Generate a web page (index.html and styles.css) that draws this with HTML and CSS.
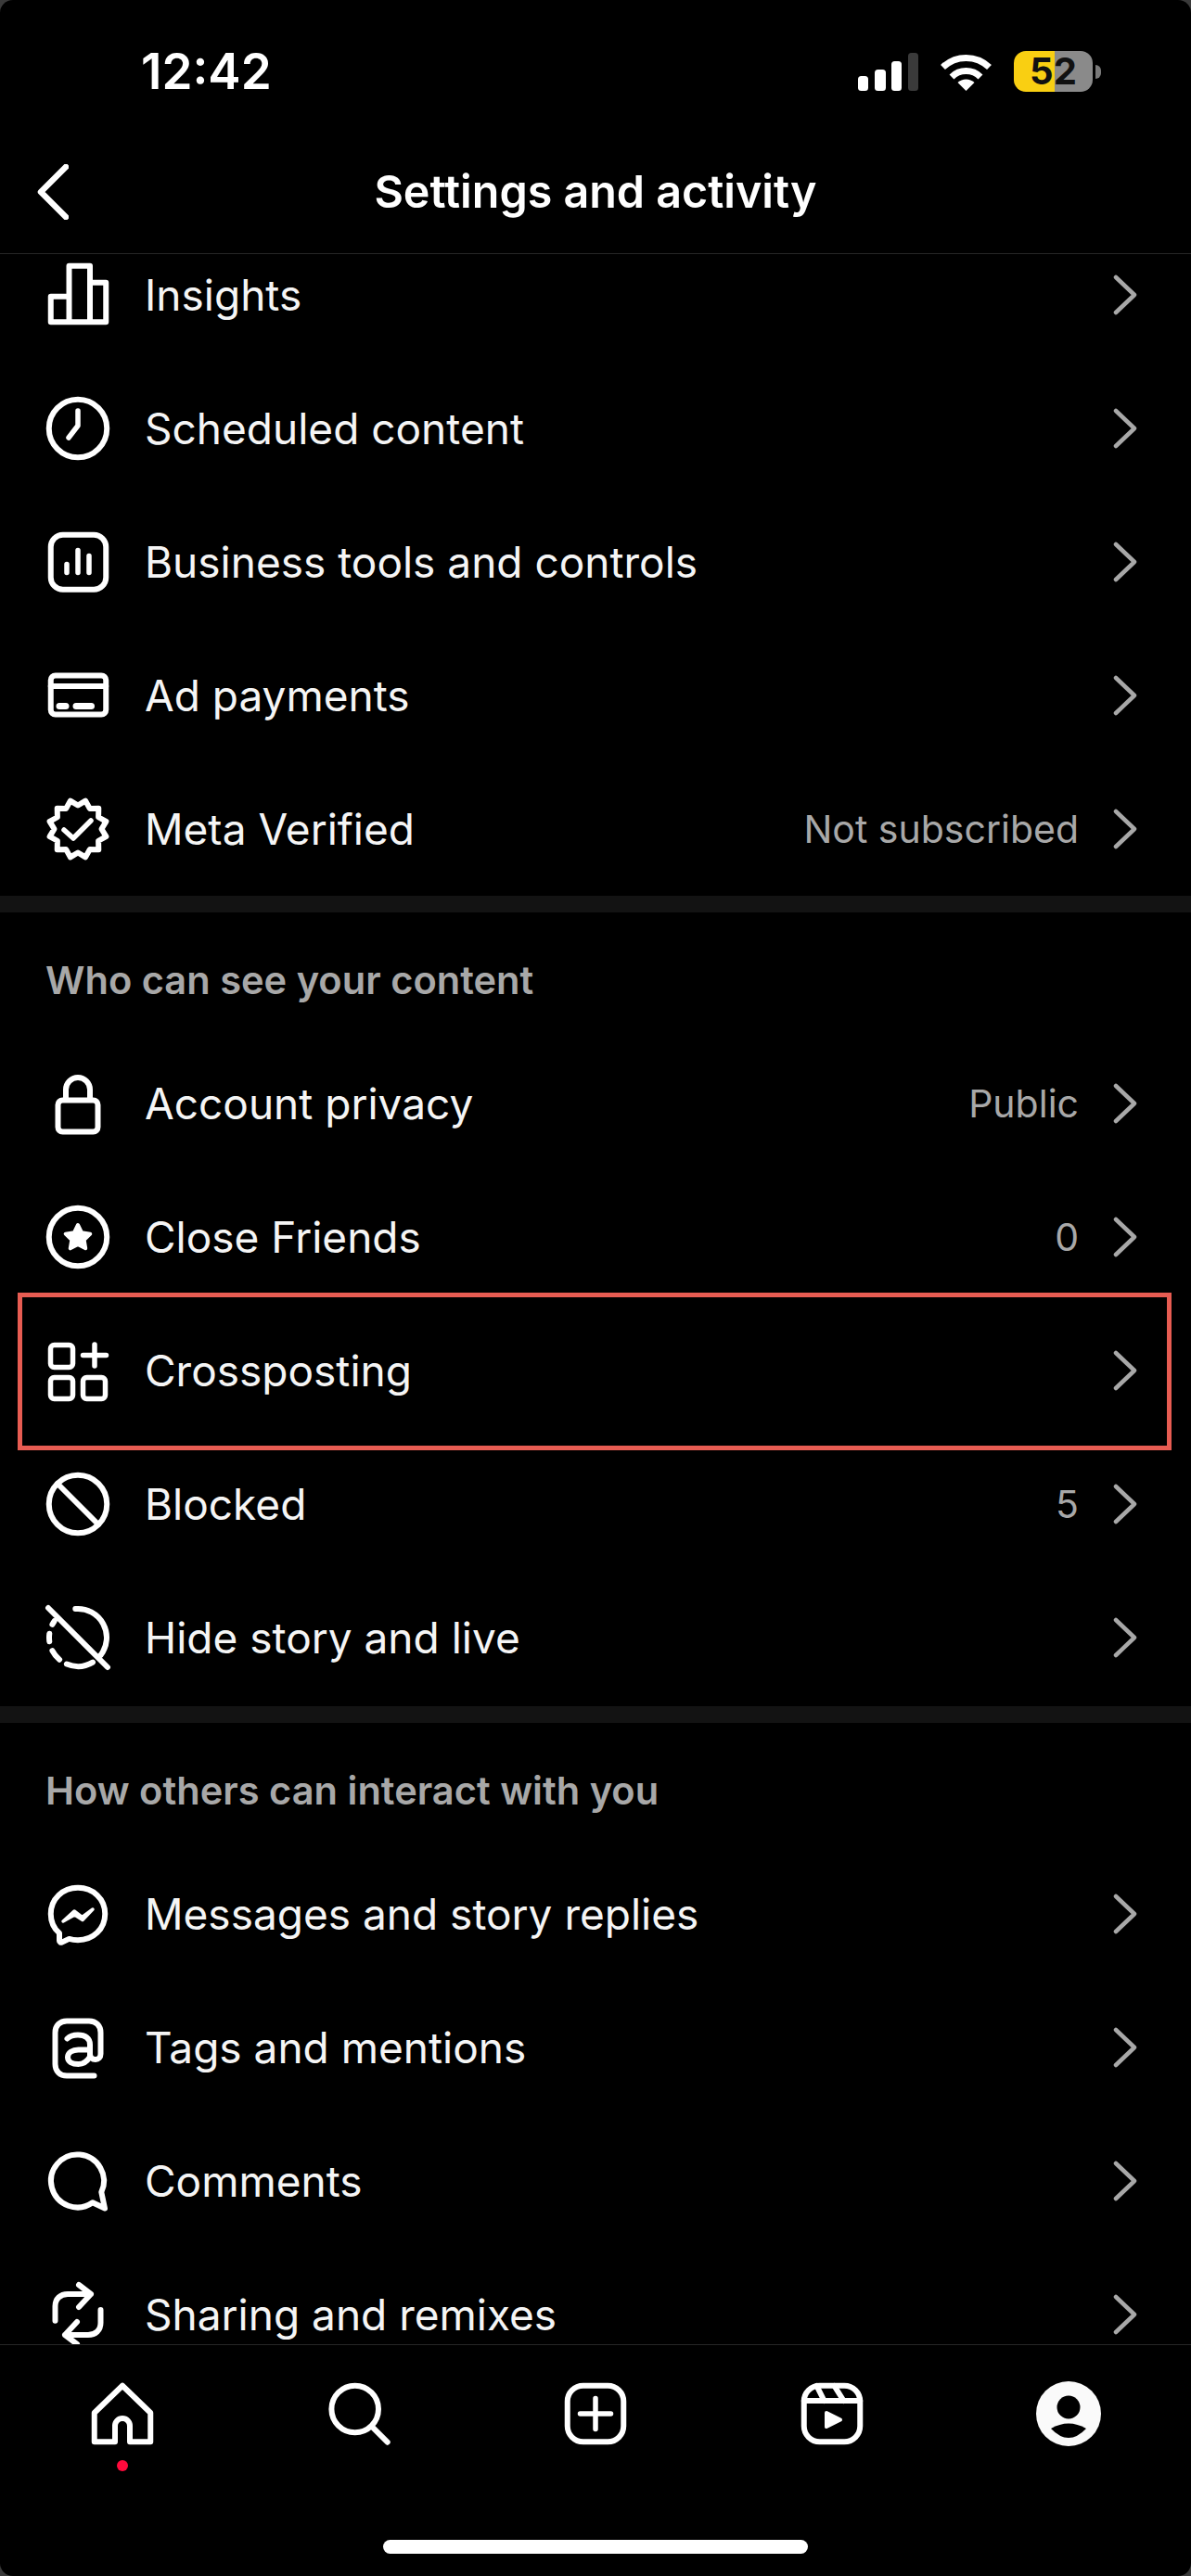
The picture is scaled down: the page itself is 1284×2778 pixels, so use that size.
FILE: index.html
```html
<!DOCTYPE html>
<html lang="en">
<head>
<meta charset="utf-8">
<title>Settings and activity</title>
<link rel="stylesheet" href="styles.css">
</head>
<body>
<div class="app">
  <div class="status">
    <span class="time">12:42</span>
    <div class="status-icons">
      <svg class="signal" viewBox="0 0 65 41"><rect x="0" y="25" width="11" height="16" rx="3.5"/><rect x="18" y="18" width="12" height="23" rx="3.5"/><rect x="36" y="9" width="11" height="32" rx="3.5"/><rect class="dim" x="54" y="0" width="11" height="41" rx="3.5"/></svg>
      <svg class="wifi" viewBox="0 0 57 41"><path class="arc" d="M3.5 15.5A36 36 0 0 1 53.5 15.5"/><path class="arc" d="M13 26A22 22 0 0 1 44 26"/><path d="M28.5 41L19.5 32A13 13 0 0 1 37.5 32Z"/></svg>
      <div class="battery"><div class="battery-body">52</div><div class="battery-cap"></div></div>
    </div>
  </div>
  <header class="nav">
    <svg class="back" viewBox="0 0 36 60"><path d="M33 3L6 30L33 57"/></svg>
    <h1 class="title">Settings and activity</h1>
  </header>
  <main class="scroll">
    <div class="list">
      <div class="row">
        <svg class="ic" viewBox="0 0 72 72"><path d="M6.75 37.75H26.5V65.25H6.75ZM26.5 4.75H49V65.25H26.5ZM49 22.75H66.25V65.25H49Z"/></svg>
        <span class="label">Insights</span>
        <svg class="chev" viewBox="0 0 26 44"><path d="M3 3L23 22L3 41"/></svg>
      </div>
      <div class="row">
        <svg class="ic" viewBox="0 0 72 72"><circle cx="36" cy="36" r="31.25"/><path class="thin" d="M36 17V33L26 46"/></svg>
        <span class="label">Scheduled content</span>
        <svg class="chev" viewBox="0 0 26 44"><path d="M3 3L23 22L3 41"/></svg>
      </div>
      <div class="row">
        <svg class="ic" viewBox="0 0 72 72"><rect x="6.75" y="6.75" width="59.5" height="59" rx="13"/><path class="thin" d="M24 38.5V47.5M36 23.5V47.5M48 29.5V47.5"/></svg>
        <span class="label">Business tools and controls</span>
        <svg class="chev" viewBox="0 0 26 44"><path d="M3 3L23 22L3 41"/></svg>
      </div>
      <div class="row">
        <svg class="ic" viewBox="0 0 72 72"><rect x="6.75" y="14.5" width="59.5" height="42" rx="5"/><path d="M6.75 26H66.25"/><path class="pill" d="M16 47.5H23M34 47.5H50.5"/></svg>
        <span class="label">Ad payments</span>
        <svg class="chev" viewBox="0 0 26 44"><path d="M3 3L23 22L3 41"/></svg>
      </div>
      <div class="row">
        <svg class="ic" viewBox="0 0 72 72"><path d="M61.5 36L66.4 44.15L58.1 48.75L58.3 58.3L48.75 58.1L44.15 66.4L36 61.5L27.85 66.4L23.25 58.1L13.7 58.3L13.9 48.75L5.6 44.15L10.5 36L5.6 27.85L13.9 23.25L13.7 13.7L23.25 13.9L27.85 5.6L36 10.5L44.15 5.6L48.75 13.9L58.3 13.7L58.1 23.25L66.4 27.85Z"/><path class="thin" d="M21 37L31 46L50 27"/></svg>
        <span class="label">Meta Verified</span>
        <span class="value">Not subscribed</span>
        <svg class="chev" viewBox="0 0 26 44"><path d="M3 3L23 22L3 41"/></svg>
      </div>
      <div class="divider"></div>
      <h2 class="section">Who can see your content</h2>
      <div class="row">
        <svg class="ic" viewBox="0 0 72 72"><rect x="14.5" y="32.5" width="43" height="34" rx="5"/><path d="M23 32V21A13 13 0 0 1 49 21V32"/></svg>
        <span class="label">Account privacy</span>
        <span class="value">Public</span>
        <svg class="chev" viewBox="0 0 26 44"><path d="M3 3L23 22L3 41"/></svg>
      </div>
      <div class="row">
        <svg class="ic" viewBox="0 0 72 72"><circle cx="36" cy="36" r="31.25"/><path class="solid" d="M36 23L40.1 31.34L49.3 32.67L42.66 39.16L44.23 48.33L36 44L27.77 48.33L29.34 39.16L22.7 32.67L31.9 31.34Z"/></svg>
        <span class="label">Close Friends</span>
        <span class="value">0</span>
        <svg class="chev" viewBox="0 0 26 44"><path d="M3 3L23 22L3 41"/></svg>
      </div>
      <div class="row row-marked">
        <svg class="ic" viewBox="0 0 72 72"><rect class="thin" x="6.5" y="8.5" width="24" height="24" rx="4"/><rect class="thin" x="6.5" y="43.5" width="24" height="23" rx="4"/><rect class="thin" x="41.5" y="43.5" width="24" height="23" rx="4"/><path class="thin" d="M41.5 19.5H66.5M54 8V31"/></svg>
        <span class="label">Crossposting</span>
        <svg class="chev" viewBox="0 0 26 44"><path d="M3 3L23 22L3 41"/></svg>
      </div>
      <div class="row">
        <svg class="ic" viewBox="0 0 72 72"><circle cx="36" cy="36" r="31.25"/><path d="M14 14L58 58"/></svg>
        <span class="label">Blocked</span>
        <span class="value">5</span>
        <svg class="chev" viewBox="0 0 26 44"><path d="M3 3L23 22L3 41"/></svg>
      </div>
      <div class="row">
        <svg class="ic" viewBox="0 0 72 72"><path d="M33.3 5.1A31 31 0 0 1 60.4 55.1M52 62.6A31 31 0 0 1 23.9 64.5M16.1 59.7A31 31 0 0 1 8.4 50.1M5.3 40.3A31 31 0 0 1 5.3 31.7M8.4 21.9A31 31 0 0 1 10.6 18.2M4 4L68 68"/></svg>
        <span class="label">Hide story and live</span>
        <svg class="chev" viewBox="0 0 26 44"><path d="M3 3L23 22L3 41"/></svg>
      </div>
      <div class="divider divider-low"></div>
      <h2 class="section">How others can interact with you</h2>
      <div class="row">
        <svg class="ic" viewBox="0 0 72 72"><path d="M36 7.75C19.5 7.75 6.75 19.8 6.75 36C6.75 44.5 10.2 51.8 16 56.8V65C16 66.5 17.5 67.2 18.7 66.6L26.5 62.9C29.5 63.8 32.6 64.2 36 64.2C52.5 64.2 65.25 52.2 65.25 36C65.25 19.8 52.5 7.75 36 7.75Z"/><path class="bolt" d="M20 44L32 33L40.5 39.5L52 31L41 42.5L32.5 37Z"/></svg>
        <span class="label">Messages and story replies</span>
        <svg class="chev" viewBox="0 0 26 44"><path d="M3 3L23 22L3 41"/></svg>
      </div>
      <div class="row">
        <svg class="ic" viewBox="0 0 72 72"><path d="M53.5 66.5H24C16.5 66.5 11.5 61.5 11.5 54V20C11.5 12.5 16.5 7.5 24 7.5H48C55.5 7.5 60.5 12.5 60.5 20V43C60.5 47 58 49 55 49C51.5 49 49 47 49 43V33C49 26 44 22.5 36 22.5C31 22.5 27 24 24.5 26.5M25 46.5C25 41.5 30 38.5 36.5 38.5H49V46C46 51 41.5 54 36.5 54C30 54 25 51.5 25 46.5Z"/></svg>
        <span class="label">Tags and mentions</span>
        <svg class="chev" viewBox="0 0 26 44"><path d="M3 3L23 22L3 41"/></svg>
      </div>
      <div class="row">
        <svg class="ic" viewBox="0 0 72 72"><path d="M51.8 59.3A28.5 28.5 0 1 1 61.3 48L65 65.5Z"/></svg>
        <span class="label">Comments</span>
        <svg class="chev" viewBox="0 0 26 44"><path d="M3 3L23 22L3 41"/></svg>
      </div>
      <div class="row">
        <svg class="ic" viewBox="0 0 72 72"><path d="M11.5 42.7V27C11.5 19 17 14 25 14H50M37 4L50 14L37 28M60.5 31V45C60.5 53 55 58 47 58H22M35 44L22 58L35 68"/></svg>
        <span class="label">Sharing and remixes</span>
        <svg class="chev" viewBox="0 0 26 44"><path d="M3 3L23 22L3 41"/></svg>
      </div>
    </div>
  </main>
  <nav class="tabs">
    <div class="tab">
      <svg class="ic" viewBox="0 0 72 72"><path d="M5.75 66.25V35L36 5.75L66.25 35V66.25H44V49A8 8 0 0 0 28 49V66.25Z"/></svg>
      <span class="dot"></span>
    </div>
    <div class="tab"><svg class="ic" viewBox="0 0 72 72"><circle cx="31.7" cy="31" r="25.3"/><path d="M50.7 50.7L66.7 66.7"/></svg></div>
    <div class="tab"><svg class="ic" viewBox="0 0 72 72"><rect x="5.75" y="5.75" width="60.5" height="60.5" rx="17"/><path class="thin" d="M36 19.5V52.5M19.5 36H52.5"/></svg></div>
    <div class="tab"><svg class="ic" viewBox="0 0 72 72"><rect x="5.75" y="5.75" width="60.5" height="60.5" rx="17"/><path d="M5.75 22H66.25M19.5 6L27.5 22M38.5 6L48.5 22"/><path class="solid" d="M30 35L45 42.5L30 50Z"/></svg></div>
    <div class="tab">
      <svg class="ic ic-profile" viewBox="0 0 72 72"><circle class="face" cx="36" cy="36" r="35"/><circle class="cut" cx="36" cy="29" r="12.5"/><path class="cut" d="M17 52Q36 41 55 52Q36 72 17 52Z"/></svg>
    </div>
  </nav>
  <div class="home-area"><div class="home-bar"></div></div>
</div>
</body>
</html>
```
FILE: styles.css
```css
* { box-sizing: border-box; }
html, body { margin: 0; padding: 0; background: #3a3a3a; }
body { font-family: Inter, "Liberation Sans", sans-serif; color: #f5f5f5; }

.app {
  width: 1284px;
  height: 2778px;
  background: #000;
  border-radius: 14px;
  display: flex;
  flex-direction: column;
  overflow: hidden;
}

/* status bar */
.status {
  height: 140px;
  flex: none;
  padding: 14px 97px 0 152px;
  display: flex;
  align-items: center;
  justify-content: space-between;
}
.time { font-size: 53px; font-weight: 600; color: #fff; line-height: 1; }
.status-icons { display: flex; align-items: center; gap: 23px; }
.signal { width: 65px; height: 41px; fill: #fff; }
.signal .dim { fill: #3a3a3a; }
.wifi { width: 57px; height: 41px; fill: #fff; }
.wifi .arc { fill: none; stroke: #fff; stroke-width: 7; }
.battery { display: flex; align-items: center; gap: 3px; }
.battery-body {
  width: 85px;
  height: 44px;
  border-radius: 13px;
  background: linear-gradient(to right, #f9cf12 52%, #8a8a8a 52%);
  color: #111;
  font-size: 40px;
  font-weight: 700;
  line-height: 44px;
  text-align: center;
}
.battery-cap { width: 6px; height: 15px; border-radius: 0 6px 6px 0; background: #7a7a7a; }

/* top nav */
.nav {
  height: 134px;
  flex: none;
  display: grid;
  grid-template-columns: 1fr auto 1fr;
  align-items: center;
  padding-left: 38px;
  border-bottom: 1px solid #262626;
}
.back { width: 36px; height: 60px; fill: none; stroke: #fff; stroke-width: 6.5; stroke-linecap: round; stroke-linejoin: round; }
.title { margin: 0 0 0 -38px; font-size: 48.4px; font-weight: 600; color: #fff; white-space: nowrap; text-align: center; }

/* list */
.scroll { flex: 1; min-height: 0; overflow: hidden; }
.list { margin-top: -28px; }
.row {
  height: 144px;
  display: flex;
  align-items: center;
  padding: 0 58px 0 48px;
  position: relative;
}
.ic {
  width: 72px;
  height: 72px;
  flex: none;
  fill: none;
  stroke: #fff;
  stroke-width: 6;
  stroke-linecap: round;
  stroke-linejoin: round;
}
.ic .thin { stroke-width: 5.5; }
.ic .pill { stroke-width: 7; }
.ic .solid { fill: #fff; stroke-width: 4; }
.ic .bolt { fill: #fff; stroke-width: 3.5; }
.label { margin-left: 36px; flex: 1; font-size: 46px; font-weight: 400; color: #f5f5f5; white-space: nowrap; }
.value { font-size: 41px; color: #a8a8a8; white-space: nowrap; margin-right: 37px; }
.chev { width: 26px; height: 44px; flex: none; fill: none; stroke: #a8a8a8; stroke-width: 4.5; stroke-linecap: round; stroke-linejoin: round; }
.row-marked::after {
  content: "";
  position: absolute;
  inset: -12px 21px -14px 19px;
  border: 5px solid #e75c52;
  pointer-events: none;
}
.divider { height: 18px; background: #131313; }
.divider-low { margin-top: 2px; }
.section {
  height: 134px;
  margin: 0;
  padding: 12px 0 0 49px;
  display: flex;
  align-items: center;
  font-size: 41.6px;
  font-weight: 600;
  color: #a8a8a8;
}

/* tab bar */
.tabs {
  height: 110px;
  flex: none;
  padding: 38px 96px 0;
  border-top: 1px solid #262626;
  display: flex;
  justify-content: space-between;
}
.tab { position: relative; width: 72px; height: 72px; }
.dot {
  position: absolute;
  left: 30px;
  top: 86px;
  width: 12px;
  height: 12px;
  border-radius: 50%;
  background: #ff0a3c;
}
.ic-profile { stroke: none; }
.ic-profile .face { fill: #fafafa; }
.ic-profile .cut { fill: #000; }
.home-area { height: 140px; flex: none; padding-top: 101px; display: flex; justify-content: center; }
.home-bar { width: 458px; height: 15px; border-radius: 8px; background: #fff; }
```
